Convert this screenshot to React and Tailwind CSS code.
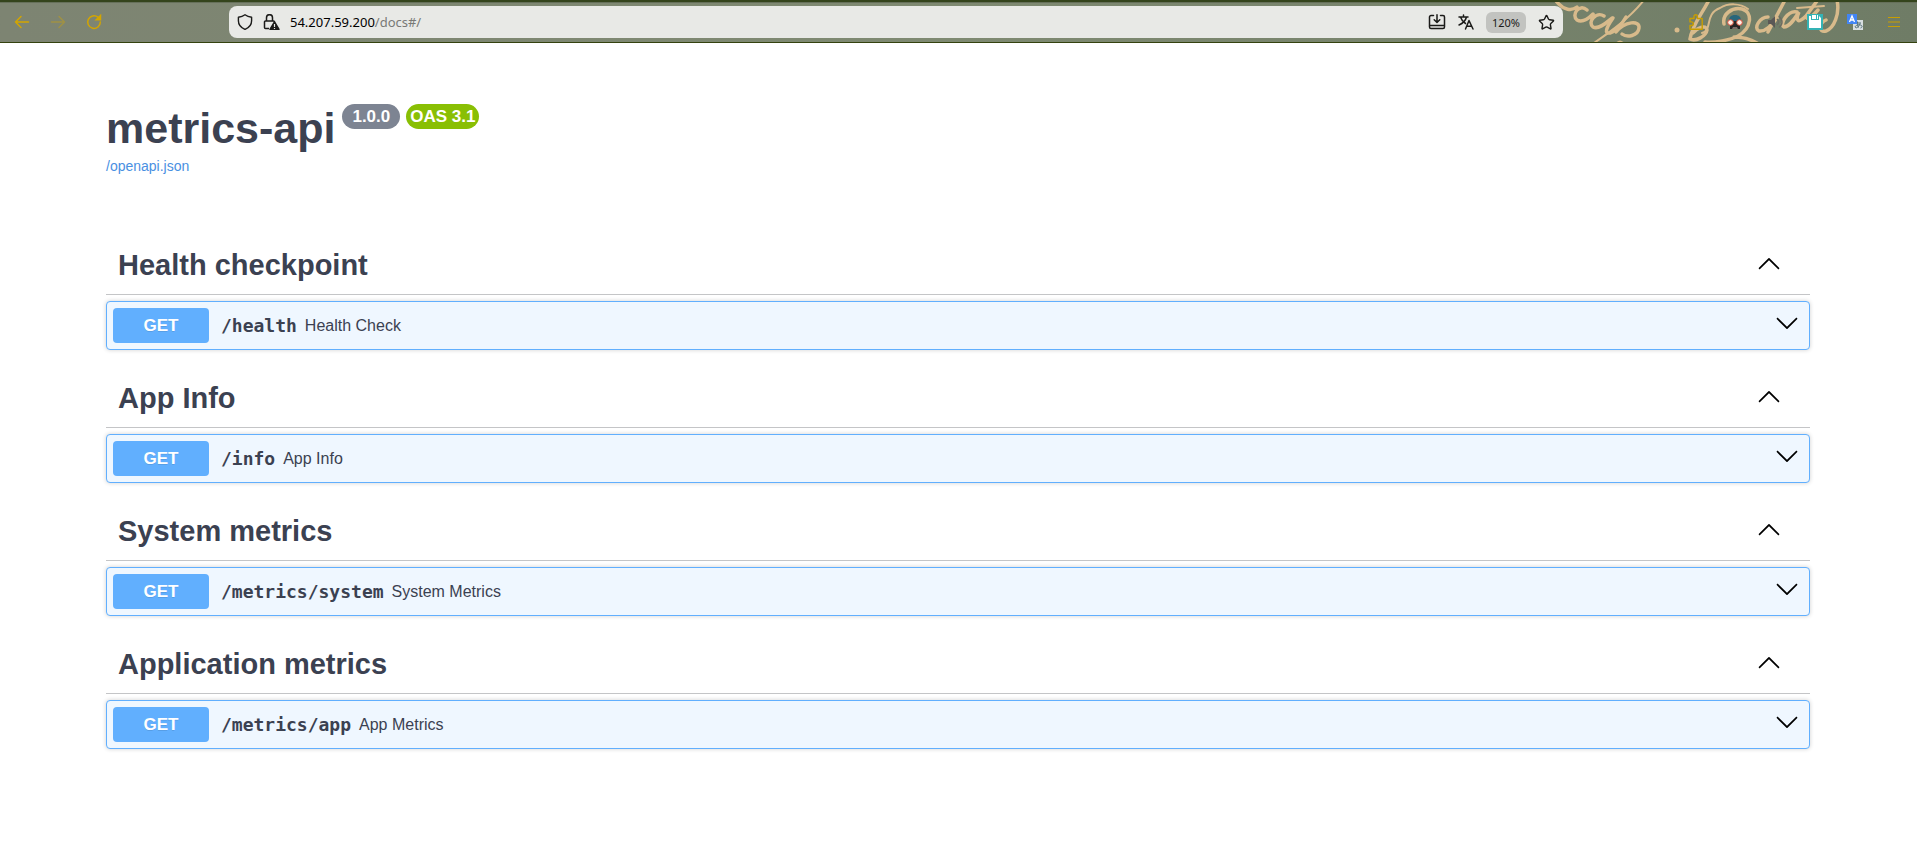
import { useState } from "react"
import { Star } from "lucide-react"

const sections = [
  { tag: "Health checkpoint", path: "/health", summary: "Health Check" },
  { tag: "App Info", path: "/info", summary: "App Info" },
  { tag: "System metrics", path: "/metrics/system", summary: "System Metrics" },
  { tag: "Application metrics", path: "/metrics/app", summary: "App Metrics" },
]

const Chevron = ({ up }) => (
  <svg width="24" height="24" viewBox="0 0 20 20" className={up ? "" : "rotate-180"} aria-hidden="true">
    <path d="M17.418 14.908c.272.281.709.281.979 0s.271-.736 0-1.017l-7.908-7.83a.688.688 0 0 0-.979 0l-7.908 7.83c-.27.281-.27.736 0 1.017s.709.281.979 0L10 7.767z" />
  </svg>
)

// Parchment flourishes behind the toolbar buttons
const ThemeArt = () => (
  <svg
    className="absolute right-0 top-0"
    width="377"
    height="40"
    viewBox="1540 2 377 40"
    fill="none"
    stroke="#d8ba8b"
    strokeLinecap="round"
    aria-hidden="true"
  >
    <g strokeWidth="3.500">
      <path d="M1556 1C1564 11 1572 11 1577 7M1587 10C1579 3 1571 15 1577 20C1582 23 1589 18 1593 14M1604 16C1596 11 1587 22 1593 27C1599 30 1607 22 1612 18" />
      <path d="M1613 18C1606 28 1604 34 1610 33C1617 31 1622 24 1626 17" />
      <path d="M1616 32C1625 21 1640 20 1639 28C1638 36 1627 38 1622 34" />
      <path d="M1709 0C1702 14 1692 25 1690 39M1690 39C1696 42 1706 36 1707 30C1706 24 1697 28 1693 33" />
      <path d="M1724 24C1722 14 1732 7 1742 9C1753 12 1752 28 1738 36C1730 40 1715 43 1705 42M1734 37C1743 37 1750 39 1757 43" />
      <path d="M1768 17C1760 17 1753 28 1759 31C1765 32 1772 25 1777 18M1768 32L1784 2" />
      <path d="M1797 12C1788 10 1779 24 1784 27C1790 27 1795 18 1799 12C1795 21 1798 24 1806 16L1817 1M1806 16C1806 21 1811 18 1818 10" />
      <path d="M1837 0C1840 14 1834 28 1826 31C1818 33 1819 23 1826 20" />
    </g>
    <g strokeWidth="2">
      <path d="M1644 0C1630 18 1610 32 1594 43M1617 43C1619 41 1621 41 1623 43" />
      <path d="M1702 33C1713 30 1704 14 1720 8C1728 3 1740 3 1748 9M1797 8L1824 6" />
    </g>
    <circle cx="1677" cy="30" r="2.500" fill="#d8ba8b" stroke="none" />
  </svg>
)

const BrowserBar = () => (
  <header className="relative flex h-[43px] items-center border-b border-[#34420e] border-t-2 border-t-[#34441c] bg-linear-to-r from-[#7d8472] via-[#7f8a72] to-[#6f7c66] px-3 shadow-[inset_0_1px_0_#66705a]">
    <ThemeArt />
    <nav className="relative flex w-[217px] shrink-0 items-center gap-4 text-[#d3a500]" aria-label="Browser navigation">
      <button className="grid size-5 place-items-center" aria-label="Back">
        <svg width="16" height="16" viewBox="0 0 16 16" fill="none" stroke="currentColor" strokeWidth="1.5" strokeLinecap="round" strokeLinejoin="round">
          <path d="M14.500 8H1.500M7 2.500 1.500 8 7 13.500" />
        </svg>
      </button>
      <button className="grid size-5 place-items-center opacity-40" aria-label="Forward">
        <svg width="16" height="16" viewBox="0 0 16 16" fill="none" stroke="currentColor" strokeWidth="1.5" strokeLinecap="round" strokeLinejoin="round">
          <path d="M1.500 8h13M9 2.500 14.500 8 9 13.500" />
        </svg>
      </button>
      <button className="grid size-5 place-items-center" aria-label="Reload">
        <svg width="16" height="16" viewBox="0 0 16 16" fill="none" stroke="currentColor" strokeWidth="1.5" strokeLinecap="round">
          <path d="M12 3.200A6.300 6.300 0 1 0 14.300 8" />
          <path d="M14.500 1.500v4.300h-4.300z" fill="currentColor" />
        </svg>
      </button>
    </nav>
    <div className="relative flex h-8 min-w-0 grow items-center gap-[10px] rounded-lg bg-[#e8e9e6] px-2 text-[#1b1b19]">
      <svg width="16" height="16" viewBox="0 0 16 16" fill="none" stroke="currentColor" strokeWidth="1.400" strokeLinejoin="round" aria-hidden="true">
        <path d="M8 .8C6 2.200 3.800 2.900 1.400 3.200v3.600c0 3.900 2.600 7 6.600 8.600 4-1.600 6.600-4.700 6.600-8.600V3.200C12.200 2.900 10 2.200 8 .8z" />
      </svg>
      <svg width="17" height="16" viewBox="0 0 17 16" fill="none" stroke="currentColor" strokeWidth="1.500" aria-hidden="true">
        <path d="M6 14.500H2.500a1 1 0 0 1-1-1V8a1 1 0 0 1 1-1h8a1 1 0 0 1 1 1M3.500 7V3.700a3 3 0 0 1 6 0V7" />
        <path d="M11.500 7.800 16 15.300H7z" fill="currentColor" strokeLinejoin="round" />
        <path d="M11.500 10v3M11.500 14v1" stroke="#e8e9e6" strokeWidth="1.200" />
      </svg>
      <p className="grow pt-[2px] font-['Noto_Sans',sans-serif] text-[13px] text-black">
        54.207.59.200<span className="text-[#787976]">/docs#/</span>
      </p>
      <button className="pr-[2px]" aria-label="Install page">
        <svg width="18" height="16" viewBox="0 0 18 16" fill="none" stroke="currentColor" strokeWidth="1.500" strokeLinecap="round" strokeLinejoin="round">
          <path d="M5.500 1.500H3a1.500 1.500 0 0 0-1.500 1.500v10A1.500 1.500 0 0 0 3 14.500h12a1.500 1.500 0 0 0 1.500-1.500V3A1.500 1.500 0 0 0 15 1.500h-2.500M1.500 11.500h15M9 .8v7.500M6.200 5.700 9 8.500l2.800-2.800" />
        </svg>
      </button>
      <button className="pr-[2px]" aria-label="Translate page">
        <svg width="16" height="16" viewBox="0 0 16 16" fill="none" stroke="currentColor" strokeWidth="1.500" strokeLinecap="round" strokeLinejoin="round">
          <path d="M1 3h9M5.500 1v2M8.500 3C7.500 7 4.500 9.500 1 11M2.500 3c1 3 2.500 5 5 6.500M7.500 15l3.500-8.500 4 8.500M8.700 12.200h5" />
        </svg>
      </button>
      <button className="mr-[2px] h-[21px] rounded-md bg-[#c2c3c0] px-[6px] font-['Noto_Sans',sans-serif] text-[11px] leading-[22px]">120%</button>
      <button aria-label="Bookmark">
        <Star size={17} strokeWidth={2} />
      </button>
    </div>
    <div className="relative flex w-[342px] shrink-0 items-center justify-end gap-6 text-[#c99e00]">
      <button aria-label="Extensions">
        <svg width="16" height="16" viewBox="0 0 16 16" fill="none" stroke="currentColor" strokeWidth="1.400" strokeLinejoin="round">
          <path d="M3 15.200V11.500h1.500a1.800 1.800 0 0 0 0-3.600H3V4.500h4V2.500a1.700 1.700 0 0 1 3.400 0v2h4.800v10.700z" />
        </svg>
      </button>
      <button aria-label="Goggles extension">
        <svg width="16" height="16" viewBox="0 0 16 16">
          <path d="M2 7C2 3 4 1 8 1s6 2 6 6z" fill="#29667b" />
          <path d="M3 7h10v8H3z" fill="#272526" />
          <path d="M6 13h4l1 2H5z" fill="#7c6c68" />
          <circle cx="3.500" cy="8.500" r="2.800" fill="#fff0e8" stroke="#d84c38" />
          <circle cx="12.500" cy="8.500" r="2.800" fill="#fff0e8" stroke="#d84c38" />
        </svg>
      </button>
      <button aria-label="Volume extension">
        <svg width="16" height="16" viewBox="0 0 16 16" fill="none" stroke="#6d6c62" strokeWidth="1.500">
          <path d="M1 6h3l4-4v12l-4-4H1z" fill="#5b5856" stroke="none" />
          <path d="M10 5c2 2 2 4 0 6M12 2.500c4 3 4 8 0 11" />
        </svg>
      </button>
      <button aria-label="Save extension">
        <svg width="16" height="16" viewBox="0 0 16 16">
          <path d="M0 0h16v16H0z" fill="#34b3b5" />
          <path d="M2 2h10l2 2v10H2z" fill="#fff" />
          <path d="M4 1h8v5H4z" fill="#34b3b5" />
          <path d="M5 1h4v4H5zM10 1h1v4h-1z" fill="#fff" />
        </svg>
      </button>
      <button aria-label="Dictionary extension">
        <svg width="16" height="16" viewBox="0 0 16 16">
          <path d="M6 6h10v10H6z" fill="#d8dfe0" />
          <path d="M8 9h6M10.500 7.500c0 3 0 4 1 6M13 9.500c-1 3-3 5-4.500 4s2-3.500 5-2.500 1 3 0 3" fill="none" stroke="#536f79" />
          <path d="M0 0h10v10H0z" fill="#4285f4" />
          <path d="m2.500 8 2.500-6 2.500 6M3.500 6h3" fill="none" stroke="#fff" strokeWidth="1.300" />
        </svg>
      </button>
      <button className="pr-1" aria-label="Menu">
        <svg width="14" height="16" viewBox="0 0 14 16" stroke="currentColor" strokeWidth="1.200">
          <path d="M1 3.500h12M1 8h12M1 12.500h12" />
        </svg>
      </button>
    </div>
  </header>
)

const Section = ({ tag, path, summary }) => {
  const [open, setOpen] = useState(true)

  return (
    <section className={open ? "mb-5" : "mb-1"}>
      <h2 className="border-b border-[#c4c5c7]">
        <button
          onClick={() => setOpen(!open)}
          aria-expanded={open}
          className="flex h-[57px] w-full items-start justify-between pt-[6px] pl-3 pr-[29px] text-left text-[29px] leading-[44px] font-bold"
        >
          {tag}
          <span className="pt-2">
            <Chevron up={open} />
          </span>
        </button>
      </h2>
      {open && (
        <button className="mt-[6px] flex w-full items-center rounded border border-[#61affe] bg-[#eff7ff] p-[6px] text-left shadow-[0_0_4px_rgba(0,0,0,0.19)]">
          <span className="w-24 rounded-[4px] bg-[#61affe] text-center text-[17px] leading-[35px] font-bold text-white [text-shadow:0_1px_0_rgba(0,0,0,0.1)]">
            GET
          </span>
          <span className="pl-3 font-['DejaVu_Sans_Mono',monospace] text-[18px] leading-6 font-bold">{path}</span>
          <span className="grow pl-2 text-base">{summary}</span>
          <span className="pr-1 pb-1">
            <Chevron />
          </span>
        </button>
      )}
    </section>
  )
}

const App = () => {
  return (
    <div className="min-h-screen bg-white font-['Liberation_Sans',Arial,sans-serif] text-[#3b4151]">
      <BrowserBar />
      <main className="mx-auto max-w-[1753px] pt-[60px] pr-[25px] pl-6">
        <div className="mb-[58px]">
          <div className="flex items-start">
            <h1 className="text-[43px] leading-[50px] font-bold">metrics-api</h1>
            <div className="flex gap-[6px] pt-px pl-[7px] text-[17px] leading-[25px] font-bold text-white">
              <span className="rounded-full bg-[#7d8492] px-[10px]">1.0.0</span>
              <span className="rounded-full bg-[#89bf04] px-1">OAS 3.1</span>
            </div>
          </div>
          <a href="/openapi.json" className="block text-sm leading-[26px] text-[#4990e2]">
            /openapi.json
          </a>
        </div>
        {sections.map((section) => (
          <Section key={section.path} {...section} />
        ))}
      </main>
    </div>
  )
}

export default App
